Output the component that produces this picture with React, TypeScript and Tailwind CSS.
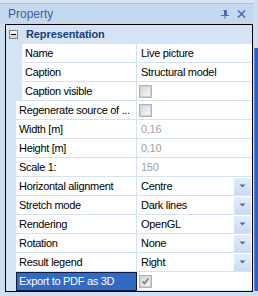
type RowKind = "text" | "muted" | "check" | "select";

type PropertyRow = {
  label: string;
  value?: string;
  kind: RowKind;
  checked?: boolean;
  indent?: boolean;
  selected?: boolean;
};

const rows: PropertyRow[] = [
  { label: "Name", value: "Live picture", kind: "text", indent: true },
  { label: "Caption", value: "Structural model", kind: "text", indent: true },
  { label: "Caption visible", kind: "check", indent: true },
  { label: "Regenerate source of ...", kind: "check" },
  { label: "Width [m]", value: "0,16", kind: "muted" },
  { label: "Height [m]", value: "0,10", kind: "muted" },
  { label: "Scale 1:", value: "150", kind: "muted" },
  { label: "Horizontal alignment", value: "Centre", kind: "select" },
  { label: "Stretch mode", value: "Dark lines", kind: "select" },
  { label: "Rendering", value: "OpenGL", kind: "select" },
  { label: "Rotation", value: "None", kind: "select" },
  { label: "Result legend", value: "Right", kind: "select" },
  { label: "Export to PDF as 3D", kind: "check", checked: true, selected: true },
];

function Checkbox({ checked }: { checked?: boolean }) {
  return (
    <div className="ml-[2px] flex h-[13px] w-[13px] items-center justify-center border border-[#a3b5d0] bg-white">
      <div className="relative h-[11px] w-[11px] border border-[#d2d2cc] bg-gradient-to-br from-[#d8d8d2] to-[#f6f6f4]">
        {checked && (
          <svg className="absolute -left-[1px] -top-[1px]" width="11" height="11" viewBox="0 0 11 11">
            <path d="M2.5 5.5 L4.5 7.5 L8.5 2.5" fill="none" stroke="#7088ad" strokeWidth="1.8" />
          </svg>
        )}
      </div>
    </div>
  );
}

function DropButton() {
  return (
    <div className="mr-[1px] ml-auto flex h-[17px] w-[17px] items-center justify-center bg-gradient-to-b from-[#e4eefb] to-[#c8dbf3]">
      <svg width="7" height="4" viewBox="0 0 7 4">
        <path d="M0.5 0.5 H6.5 L3.5 3.5 Z" fill="#4f6c9a" />
      </svg>
    </div>
  );
}

function Row({ row }: { row: PropertyRow }) {
  return (
    <div className="flex h-[19px]">
      <div className={row.indent ? "w-[16px] shrink-0" : "w-[10px] shrink-0"} />
      <div
        className={
          row.selected
            ? "flex h-[19px] flex-1 items-center border border-[#0b1b3d] bg-[#316ac5] pl-[2px] text-white"
            : "flex h-[19px] flex-1 items-center border-r border-b border-[#d5e2f2] bg-white pl-[3px] text-[#000000]"
        }
      >
        {row.label}
      </div>
      <div className="flex h-[19px] w-[115px] shrink-0 items-center border-b border-[#d5e2f2] bg-white">
        {row.kind === "check" && <Checkbox checked={row.checked} />}
        {row.kind === "text" && <span className="pl-[4px]">{row.value}</span>}
        {row.kind === "muted" && <span className="pl-[4px] text-[#a3a3a3]">{row.value}</span>}
        {row.kind === "select" && (
          <>
            <span className="pl-[4px]">{row.value}</span>
            <DropButton />
          </>
        )}
      </div>
    </div>
  );
}

export default function App() {
  return (
    <div className="flex h-[296px] w-[258px] overflow-hidden bg-[#cfdff2] font-['Liberation_Sans',Arial,sans-serif] text-[11px] tracking-[-0.3px] text-black">
      <div className="flex w-[254px] flex-col">
        <div className="h-[3px] bg-[#dbe6f4]" />
        <div className="h-[1px] bg-[#a9c1e2]" />
        <div className="flex h-[20px] items-center bg-[#c4d8f0] pl-[8px] pr-[8px]">
          <span className="text-[12px] tracking-normal text-[#3e5f9c]">Property</span>
          <div className="ml-auto flex items-center gap-[8px]">
            <svg width="8" height="9" viewBox="0 0 8 9">
              <path d="M2.5 0.5 H5.5 V5 M3.5 0.5 V5" fill="none" stroke="#4a6ea8" strokeWidth="1" />
              <path d="M5 0.5 V5" fill="none" stroke="#4a6ea8" strokeWidth="2" />
              <path d="M0 5.5 H8 M4 5.5 V9" fill="none" stroke="#4a6ea8" strokeWidth="1" />
            </svg>
            <svg width="9" height="8" viewBox="0 0 9 8">
              <path d="M1 0.5 L8 7.5 M8 0.5 L1 7.5" fill="none" stroke="#4a6ea8" strokeWidth="1.6" />
            </svg>
          </div>
        </div>
        <div className="ml-[5px] flex w-[248px] flex-col border border-black bg-[#d5e4f5]">
          <div className="flex h-[19px] items-center">
            <div className="ml-[3px] flex h-[9px] w-[9px] items-center justify-center border border-[#7f8a99] bg-gradient-to-b from-white to-[#c9ced6]">
              <div className="h-[1px] w-[5px] bg-black" />
            </div>
            <span className="ml-[8px] text-[11px] font-bold tracking-[-0.1px] text-[#1d3b78]">Representation</span>
          </div>
          {rows.map((row) => (
            <Row key={row.label} row={row} />
          ))}
        </div>
      </div>
      <div className="flex w-[4px] flex-col">
        <div className="h-[48px]" />
        <div className="flex-1 border-l border-[#5a89e2] bg-[#2b5fd0]" />
        <div className="h-[5px]" />
      </div>
    </div>
  );
}
